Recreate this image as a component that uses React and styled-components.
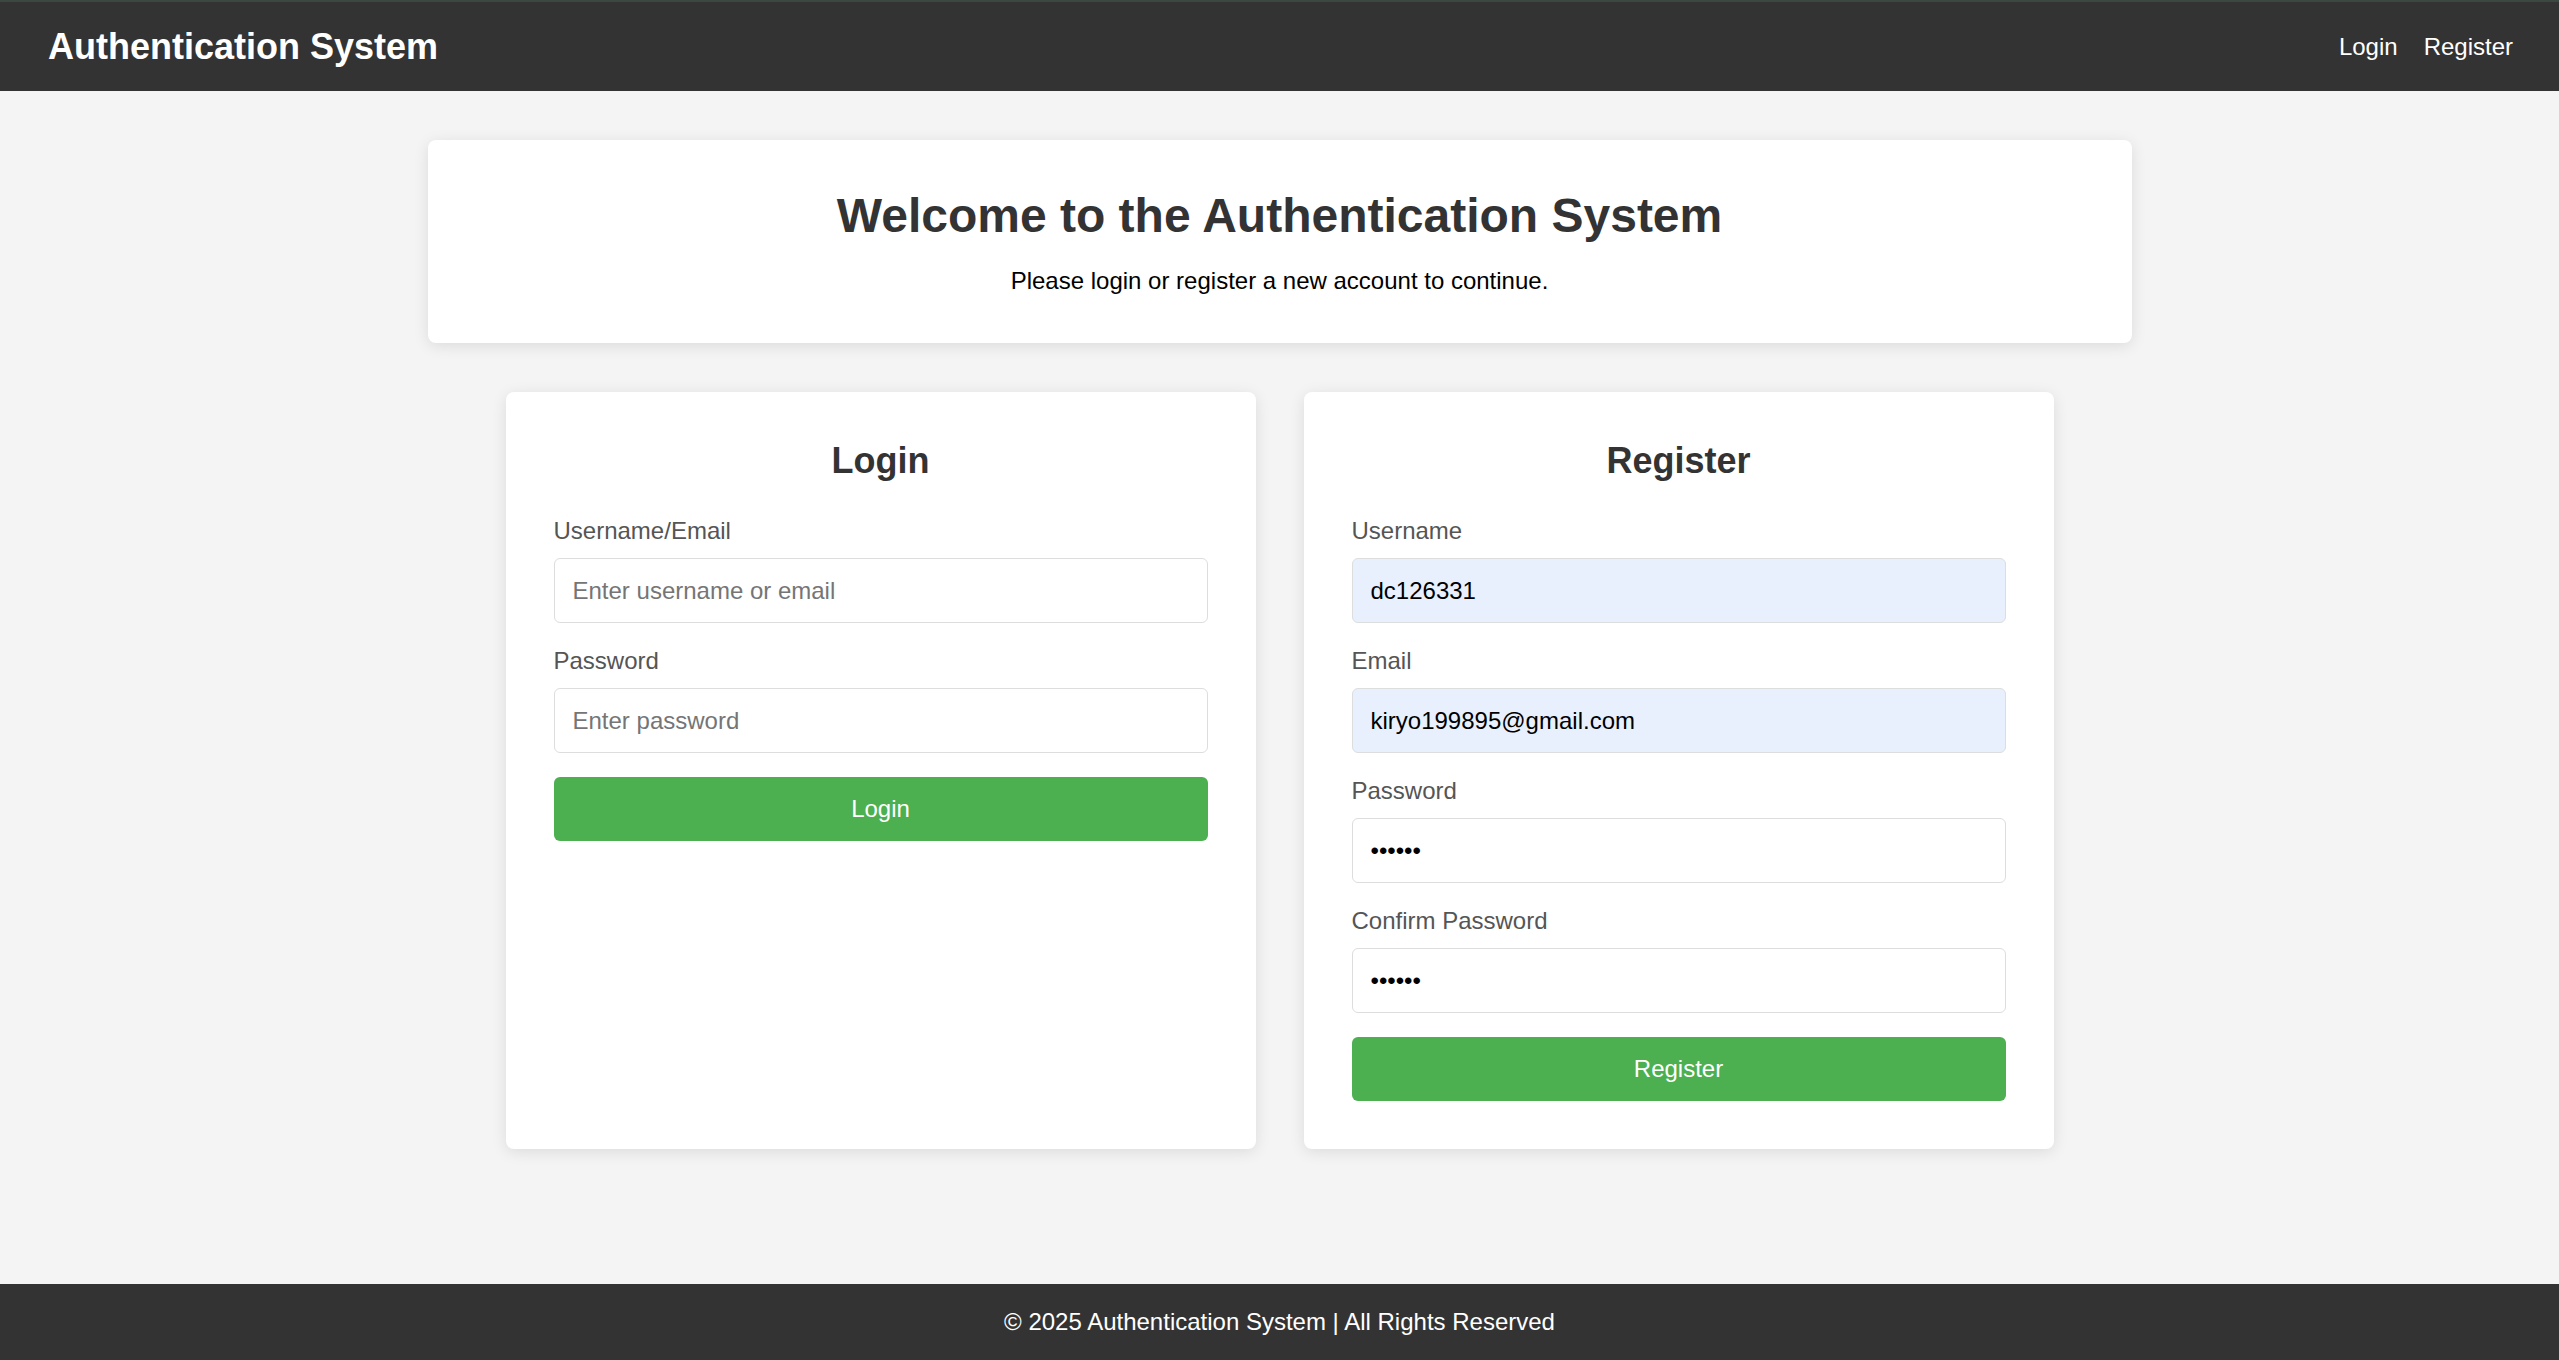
import React from 'react'
import styled, { createGlobalStyle } from 'styled-components'

const GlobalStyle = createGlobalStyle`
  * {
    box-sizing: border-box;
  }

  body {
    margin: 0;
    font-family: "Liberation Sans", Arial, sans-serif;
    background: #f4f4f4;
    color: #333;
  }
`

const registerFields = [
  { label: 'Username', type: 'text', value: 'dc126331', filled: true },
  { label: 'Email', type: 'email', value: 'kiryo199895@gmail.com', filled: true },
  { label: 'Password', type: 'password', value: '123456' },
  { label: 'Confirm Password', type: 'password', value: '123456' },
]

const loginFields = [
  { label: 'Username/Email', type: 'text', placeholder: 'Enter username or email' },
  { label: 'Password', type: 'password', placeholder: 'Enter password' },
]

function FormCard({ title, fields, action }) {
  return (
    <Card>
      <CardTitle>{title}</CardTitle>
      {
        fields.map((field, index) => (
          <Group key={index}>
            <Label>{field.label}</Label>
            <Input
              type={field.type}
              placeholder={field.placeholder}
              defaultValue={field.value}
              filled={field.filled ? 1 : 0}
            />
          </Group>
        ))
      }
      <Button>{action}</Button>
    </Card>
  )
}

function App() {
  return (
    <Page>
      <GlobalStyle />
      <Header>
        <Brand>Authentication System</Brand>
        <Nav>
          <NavLink href="#">Login</NavLink>
          <NavLink href="#">Register</NavLink>
        </Nav>
      </Header>

      <Main>
        <Welcome>
          <Heading>Welcome to the Authentication System</Heading>
          <Lead>Please login or register a new account to continue.</Lead>
        </Welcome>

        <Forms>
          <FormCard title="Login" fields={loginFields} action="Login" />
          <FormCard title="Register" fields={registerFields} action="Register" />
        </Forms>
      </Main>

      <Footer>© 2025 Authentication System | All Rights Reserved</Footer>
    </Page>
  )
}

const Page = styled.div`
  display: flex;
  flex-direction: column;
  min-height: 100vh;
`

const Header = styled.header`
  display: flex;
  justify-content: space-between;
  align-items: center;
  height: 91px;
  padding: 0 46px 0 48px;
  background: #333;
  border-top: 2px solid #3b4842;
`

const Brand = styled.h1`
  margin: 0;
  font-size: 36px;
  font-weight: 700;
  color: #fff;
`

const Nav = styled.nav`
  display: flex;
  gap: 26px;
`

const NavLink = styled.a`
  font-size: 24px;
  color: #fff;
  text-decoration: none;
`

const Main = styled.main`
  width: 100%;
  max-width: 1800px;
  margin: 0 auto;
  padding: 49px 48px 48px;
`

const Welcome = styled.section`
  padding: 48px;
  text-align: center;
  background: #fff;
  border-radius: 8px;
  box-shadow: 0 3px 15px rgba(0, 0, 0, 0.1);
`

const Heading = styled.h2`
  margin: 0 0 24px;
  font-size: 48px;
  font-weight: 700;
  color: #333;
`

const Lead = styled.p`
  margin: 0;
  font-size: 24px;
  color: #000;
`

const Forms = styled.div`
  display: flex;
  justify-content: center;
  gap: 48px;
  margin-top: 49px;
`

const Card = styled.div`
  flex: 1;
  max-width: 750px;
  padding: 48px;
  background: #fff;
  border-radius: 8px;
  box-shadow: 0 3px 15px rgba(0, 0, 0, 0.1);
`

const CardTitle = styled.h3`
  margin: 0 0 36px;
  font-size: 36px;
  line-height: 41px;
  font-weight: 700;
  text-align: center;
  color: #333;
`

const Group = styled.div`
  margin-bottom: 24px;
`

const Label = styled.label`
  display: block;
  margin-bottom: 13px;
  font-size: 24px;
  line-height: 28px;
  color: #555;
`

const Input = styled.input`
  display: block;
  width: 100%;
  height: 65px;
  padding: 0 18px;
  font-family: inherit;
  font-size: 24px;
  color: #000;
  border: 1px solid #ddd;
  border-radius: 6px;
  outline: none;
  background: ${props => props.filled ? '#e8f0fe' : '#fff'};

  &::placeholder {
    color: #757575;
  }
`

const Button = styled.button`
  display: block;
  width: 100%;
  height: 64px;
  font-family: inherit;
  font-size: 24px;
  color: #fff;
  background: #4caf50;
  border: none;
  border-radius: 6px;
  cursor: pointer;
`

const Footer = styled.footer`
  margin-top: auto;
  padding: 24px;
  font-size: 24px;
  text-align: center;
  color: #fff;
  background: #333;
`

export default App
